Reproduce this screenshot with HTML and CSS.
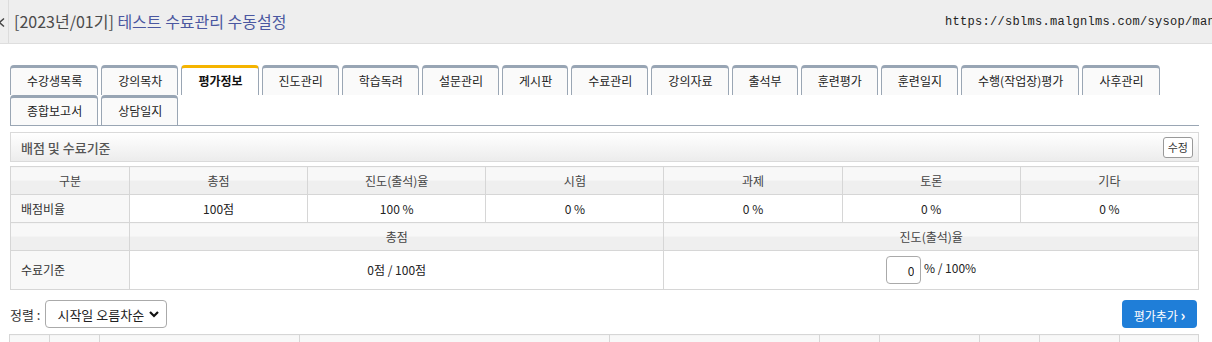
FILE: index.html
```html
<!DOCTYPE html>
<html>
	<head>
		<meta charset="UTF-8">
		<title>수료관리 수동설정</title>
		<link rel="stylesheet" href="styles.css">
	</head>

	<body>
		<div class="topbar">
			<div class="t_back">
				<svg width="8" height="44" viewBox="0 0 8 44"><path d="M4 18.5 L-0.5 22.5 L4 26.5" fill="none" stroke="#444" stroke-width="1.4"/></svg>
			</div>
			<h1 class="t_title"><span class="t_term">[2023년/01기]</span> 테스트 수료관리 수동설정</h1>
			<div class="t_url">https://sblms.malgnlms.com/sysop/management/complete</div>
		</div>

		<div class="content">
			<ul class="tabs">
				<li>수강생목록</li>
				<li>강의목차</li>
				<li class="on">평가정보</li>
				<li>진도관리</li>
				<li>학습독려</li>
				<li>설문관리</li>
				<li>게시판</li>
				<li>수료관리</li>
				<li>강의자료</li>
				<li>출석부</li>
				<li>훈련평가</li>
				<li>훈련일지</li>
				<li>수행(작업장)평가</li>
				<li>사후관리</li>
				<li>종합보고서</li>
				<li>상담일지</li>
			</ul>

			<div class="box_head">
				<span>배점 및 수료기준</span>
				<button class="btn_small">수정</button>
			</div>

			<table class="tbl">
				<colgroup>
					<col style="width:119px">
					<col><col><col><col><col><col>
				</colgroup>
				<tr>
					<th>구분</th><th>총점</th><th>진도(출석)율</th><th>시험</th><th>과제</th><th>토론</th><th>기타</th>
				</tr>
				<tr>
					<td class="lbl">배점비율</td><td>100점</td><td>100 %</td><td>0 %</td><td>0 %</td><td>0 %</td><td>0 %</td>
				</tr>
				<tr>
					<th></th><th colspan="3">총점</th><th colspan="3">진도(출석)율</th>
				</tr>
				<tr class="tall">
					<td class="lbl">수료기준</td>
					<td colspan="3">0점 / 100점</td>
					<td colspan="3"><input class="num" type="text" value="0"> % / 100%</td>
				</tr>
			</table>

			<div class="toolbar">
				<label class="sort">정렬 :
					<span class="select">
						<span>시작일 오름차순</span>
						<svg width="12" height="12" viewBox="0 0 12 12"><path d="M2 4 L6 8 L10 4" fill="none" stroke="#111" stroke-width="2.2"/></svg>
					</span>
				</label>
				<button class="btn_blue">평가추가 <span class="arr">›</span></button>
			</div>

			<table class="tbl list">
				<tr>
					<th class="c1"></th>
					<th class="c2">구분</th>
					<th class="c3">평가명</th>
					<th class="c4">평가방식</th>
					<th class="c5">응시기간</th>
					<th class="c6">배점</th>
					<th class="c7">응시자</th>
					<th class="c8">미응시</th>
					<th class="c9">상태</th>
					<th>관리자</th>
				</tr>
			</table>
		</div>
	</body>
</html>
```

FILE: styles.css
```css
* {
	margin: 0;
	padding: 0;
	box-sizing: border-box;
}

body {
	font-family: "Noto Sans CJK KR", sans-serif;
	font-size: 12px;
	color: #333;
	background: #fff;
	overflow: hidden;
}

.topbar {
	display: flex;
	align-items: center;
	height: 44px;
	background-color: #eeeeee;
	border-bottom: 1px solid #dedede;
	overflow: hidden;
}

.t_back {
	width: 9px;
	height: 44px;
	border-right: 1px solid #dcdcdc;
	flex: none;
}

.t_back svg {
	display: block;
}

.t_title {
	padding-left: 5px;
	font-size: 16px;
	font-weight: normal;
	line-height: 20px;
	color: #4a57a0;
	white-space: nowrap;
	margin-top: -2px;
}

.t_term {
	color: #4a4a4a;
}

.t_url {
	margin-left: auto;
	flex: 0 0 267px;
	overflow: hidden;
	white-space: nowrap;
	font-family: "Liberation Mono", monospace;
	font-size: 12px;
	letter-spacing: 0.3px;
	color: #222;
	margin-top: 1px;
}

.content {
	padding: 21px 13px 0 10px;
}

.tabs {
	display: flex;
	flex-wrap: wrap;
	column-gap: 3px;
	list-style: none;
	border-bottom: 1px solid #9aa6b4;
}

.tabs li {
	height: 30px;
	padding: 0 15px 0 16px;
	border: 1px solid #9aa6b4;
	border-top: 3px solid #98a5b4;
	border-bottom: 0;
	border-radius: 4px 4px 0 0;
	background-color: #fafafa;
	font-size: 12px;
	line-height: 26px;
	color: #222;
	text-align: center;
	white-space: nowrap;
}

.tabs li.on {
	border-top-color: #f5b400;
	background-color: #fff;
	font-weight: bold;
	color: #111;
}

.box_head {
	display: flex;
	align-items: center;
	justify-content: space-between;
	height: 30px;
	margin-top: 6px;
	padding: 0 5px 0 10px;
	border: 1px solid #dadada;
	background: linear-gradient(to bottom, #ffffff 0%, #ececec 100%);
	font-size: 13px;
	color: #555;
}

.box_head span {
	font-weight: 500;
}

.btn_small {
	height: 21px;
	padding: 0 4px;
	border: 1px solid #999;
	border-radius: 3px;
	background: #fff;
	font-family: inherit;
	font-size: 11px;
	color: #333;
}

.tbl {
	width: 100%;
	margin-top: 4px;
	border-collapse: collapse;
	table-layout: fixed;
	border: 1px solid #d6d6d6;
}

.tbl th,
.tbl td {
	height: 28px;
	border: 1px solid #d6d6d6;
	font-weight: normal;
	text-align: center;
	line-height: 16px;
	padding: 0;
}

.tbl th {
	background: linear-gradient(to bottom, #f8f8f8 50%, #efefef 50%);
	color: #444;
}

.tbl td {
	background-color: #fff;
	color: #222;
}

.tbl td.lbl {
	text-align: left;
	padding-left: 10px;
	background-color: #f8f8f8;
	color: #333;
}

.tbl tr.tall td {
	height: 39px;
}

.num {
	width: 35px;
	height: 28px;
	padding: 0 6px;
	border: 1px solid #aaa;
	border-radius: 4px;
	font-family: inherit;
	font-size: 12px;
	text-align: right;
	vertical-align: middle;
	color: #222;
	outline: none;
}

.toolbar {
	display: flex;
	align-items: center;
	justify-content: space-between;
	margin-top: 10px;
	padding-right: 2px;
}

.sort {
	display: flex;
	align-items: center;
	gap: 5px;
	font-size: 13px;
	color: #333;
}

.select {
	display: flex;
	align-items: center;
	justify-content: space-between;
	width: 122px;
	height: 28px;
	padding: 0 6px 0 11px;
	border: 1px solid #aaa;
	border-radius: 4px;
	background: #fff;
	color: #222;
}

.btn_blue {
	height: 28px;
	width: 75px;
	border: 0;
	border-radius: 4px;
	background-color: #1f7ed8;
	font-family: inherit;
	font-size: 12px;
	color: #fff;
}

.btn_blue .arr {
	font-size: 15px;
	font-weight: bold;
}

.tbl.list {
	margin-top: 6px;
	width: 1190px;
	margin-left: -1px;
}

.list .c1 { width: 40px; }
.list .c2 { width: 50px; }
.list .c3 { width: 200px; }
.list .c4 { width: 310px; }
.list .c5 { width: 210px; }
.list .c6 { width: 60px; }
.list .c7 { width: 100px; }
.list .c8 { width: 60px; }
.list .c9 { width: 80px; }
```
